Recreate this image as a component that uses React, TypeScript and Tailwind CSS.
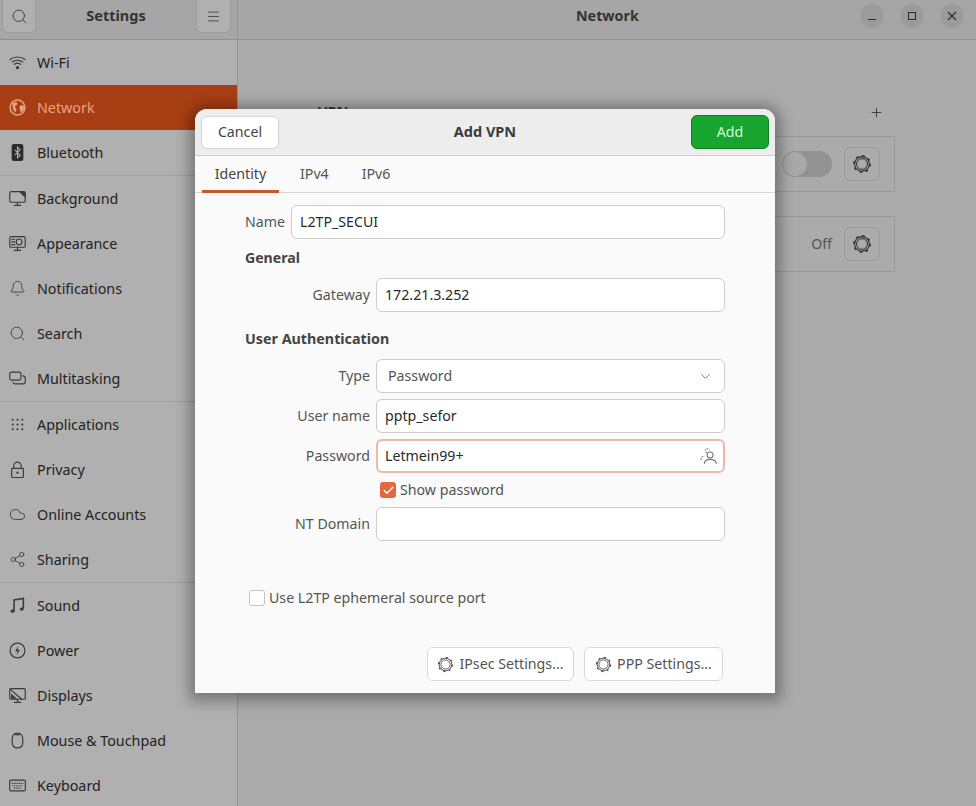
import React from "react";
import { Search, Bell, Cloud, Share2, Menu, Plus, ChevronDown, Check } from "lucide-react";

const s = { size: 17, strokeWidth: 1.2 };
const Svg = ({ children }: { children: React.ReactNode }) => (
  <svg width="17" height="17" viewBox="0 0 16 16" fill="none" stroke="currentColor" strokeWidth="1.1" strokeLinecap="round" strokeLinejoin="round">{children}</svg>
);

const WifiI = () => (
  <svg width="17" height="17" viewBox="0 0 16 16" fill="none" stroke="currentColor" strokeWidth="1.1" strokeLinecap="round">
    <path d="M1 5.2C4.8 2 11.2 2 15 5.2M3 7.5c2.8-2.2 7.2-2.2 10 0M5 9.8c1.7-1.3 4.3-1.3 6 0" />
    <circle cx="8" cy="12.8" r="1.6" fill="currentColor" stroke="none" />
  </svg>
);
const GlobeI = () => (
  <svg width="17" height="17" viewBox="0 0 16 16"><circle cx="8" cy="8" r="7" fill="none" stroke="currentColor" strokeWidth="1.4" /><path d="M3 4 L7 2.5 L8 5 L5.5 7 L7 10 L6 13 L3.5 9 Z M10 6 L14 6 L14 10 L11 13 L10 9 Z" fill="currentColor" /></svg>
);
const BluetoothI = () => (
  <svg width="17" height="17" viewBox="0 0 16 16"><rect x="2.5" y="0" width="11" height="16" rx="2" fill="#2c2c2c" /><path d="M5.5 5.5 L10.5 10.5 L8 13 L8 3 L10.5 5.5 L5.5 10.5" fill="none" stroke="#b0b0b0" strokeWidth="1" /></svg>
);
const MonitorPic = () => (
  <Svg><rect x="0.7" y="1.5" width="14.6" height="10" rx="1.5" /><path d="M5 14.5h6M8 11.5v3" /><path d="M10 1.5 L15 6.5 L15 2 Z" fill="currentColor" /></Svg>
);
const AppearanceI = () => (
  <Svg><rect x="0.7" y="1.5" width="14.6" height="10" rx="1.5" /><path d="M5 14.5h6M8 11.5v3M2.5 4h3M2.5 6.5h3M2.5 9h3" /><circle cx="9.5" cy="6.5" r="2.7" /></Svg>
);
const MultiI = () => (
  <Svg><rect x="0.7" y="2" width="10.5" height="7.5" rx="1.8" /><path d="M13 5.5c1.3 0 2.3.6 2.3 2v3.7c0 1.3-.8 1.8-2 1.8H5.5c-1 0-1.6-.5-1.8-1.3" /></Svg>
);
const GridI = () => (
  <svg width="17" height="17" viewBox="0 0 16 16" fill="currentColor">
    {[3.5, 8, 12.5].flatMap((x) => [3.5, 8, 12.5].map((y) => <circle key={`${x}-${y}`} cx={x} cy={y} r="1" />))}
  </svg>
);
const LockI = () => (
  <svg width="17" height="17" viewBox="0 0 16 16" fill="none" stroke="currentColor" strokeWidth="1.1">
    <rect x="2.5" y="7" width="11" height="8.5" rx="0.8" /><path d="M4.5 7V4.5a3.5 3.5 0 0 1 7 0V7" /><circle cx="8" cy="11" r="1.1" fill="currentColor" stroke="none" />
  </svg>
);
const MusicI = () => (
  <svg width="17" height="17" viewBox="0 0 16 16"><path d="M4.8 13V2.8L13.5 1.4v9.5" fill="none" stroke="currentColor" strokeWidth="1.5" /><ellipse cx="3.4" cy="13.3" rx="1.9" ry="1.6" fill="currentColor" /><ellipse cx="12" cy="11.4" rx="1.9" ry="1.6" fill="currentColor" /></svg>
);
const PowerI = () => (
  <Svg><circle cx="8" cy="8" r="7" /><path d="M8.8 3.5 L5.8 8.6 H8 L7.2 12.5 L10.3 7.2 H8.1 Z" fill="currentColor" stroke="none" /></Svg>
);
const DisplayI = () => (
  <Svg><rect x="0.7" y="1.5" width="14.6" height="10" rx="1" /><path d="M5 14.5h6M8 11.5v3M1 2 L12 11.5" /><path d="M2 6 L7.5 11 H2 Z" fill="currentColor" stroke="none" /></Svg>
);
const MouseI = () => (
  <Svg><path d="M8 1C5 1 3 3 3 6.5v3.5C3 13 5 15 8 15s5-2 5-5V6.5C13 3 11 1 8 1Z" /><path d="M5.5 1.8C6.5 3 9.5 3 10.5 1.8" /></Svg>
);
const KeyboardI = () => (
  <svg width="17" height="17" viewBox="0 0 16 16" fill="none" stroke="currentColor" strokeWidth="1.1">
    <rect x="0.6" y="3" width="14.8" height="10" rx="1.2" />
    <path d="M2.5 6h11M3 8.2h10M4.5 10.5h7" strokeWidth="1.1" strokeDasharray="1 0.7" />
  </svg>
);
const Gear = ({ size = 20 }: { size?: number }) => (
  <svg width={size} height={size} viewBox="0 0 20 20" fill="none" stroke="currentColor">
    <circle cx="10" cy="10" r="5.4" strokeWidth="1" />
    <circle cx="10" cy="10" r="7.4" strokeWidth="1.1" />
    <circle cx="10" cy="10" r="8.4" strokeWidth="1.2" strokeDasharray="2.5 4.1" />
  </svg>
);
const PeopleI = () => (
  <svg width="17" height="17" viewBox="0 0 16 16" fill="none" stroke="#777" strokeWidth="1"><circle cx="9.5" cy="6.5" r="2.8" /><path d="M4 15c.3-3 2.5-4.3 5.5-4.3S15 12 15.5 15" /><path d="M6.5 4.5A2.6 2.6 0 0 1 5 1.5 2.6 2.6 0 0 1 9 2M1 11c0-2 1-3.2 3-3.6" strokeDasharray="1.5 1" /></svg>
);

const groups: [React.ReactNode, string][][] = [
  [
    [<WifiI />, "Wi-Fi"],
    [<GlobeI />, "Network"],
    [<BluetoothI />, "Bluetooth"],
  ],
  [
    [<MonitorPic />, "Background"],
    [<AppearanceI />, "Appearance"],
    [<Bell {...s} />, "Notifications"],
    [<Search {...s} />, "Search"],
    [<MultiI />, "Multitasking"],
  ],
  [
    [<GridI />, "Applications"],
    [<LockI />, "Privacy"],
    [<Cloud {...s} />, "Online Accounts"],
    [<Share2 {...s} />, "Sharing"],
  ],
  [
    [<MusicI />, "Sound"],
    [<PowerI />, "Power"],
    [<DisplayI />, "Displays"],
    [<MouseI />, "Mouse & Touchpad"],
    [<KeyboardI />, "Keyboard"],
  ],
];

const fieldCls = "h-[34px] rounded-[6px] border border-[#cdcdcd] bg-white flex items-center px-2 text-[14.2px] text-[#2a2a2a]";
const Label = ({ children }: { children: React.ReactNode }) => (
  <div className="text-right text-[14.2px] text-[#555] pr-[6px]">{children}</div>
);

export default function App() {
  return (
    <div className="relative w-[976px] h-[806px] overflow-hidden bg-[#ababab] text-[#222] font-['Noto_Sans','Open_Sans',sans-serif]">
      <header className="h-[40px] flex border-b border-[#8f8f8f] bg-[#a6a6a6]">
        <div className="w-[238px] shrink-0 flex items-start justify-between pl-[2px] pr-[6px] border-r border-[#929292]">
          <button className="w-[34px] h-[33px] rounded-b-[6px] bg-[#b0b0b0] border border-t-0 border-[#9c9c9c] flex items-center justify-center text-[#333]"><Search size={17} strokeWidth={1.2} /></button>
          <span className="font-bold text-[14.5px] leading-[31px] text-[#333]">Settings</span>
          <button className="w-[35px] h-[33px] rounded-b-[6px] bg-[#b0b0b0] border border-t-0 border-[#9c9c9c] flex items-center justify-center text-[#333]"><Menu size={15} strokeWidth={1.2} /></button>
        </div>
        <div className="flex-1 flex items-start pl-[338px] pr-[12px]">
          <span className="font-bold text-[14.3px] leading-[31px] text-[#333]">Network</span>
          <div className="ml-auto mt-[4px] flex gap-[16px] text-[#2a2a2a]">
            <span className="w-[24px] h-[24px] rounded-full bg-[#9c9c9c] flex items-center justify-center"><span className="w-[8px] h-[1px] mt-[6px] bg-[#2a2a2a]" /></span>
            <span className="w-[24px] h-[24px] rounded-full bg-[#9c9c9c] flex items-center justify-center"><span className="w-[8px] h-[8px] border border-[#2a2a2a]" /></span>
            <span className="w-[24px] h-[24px] rounded-full bg-[#9c9c9c] flex items-center justify-center">
              <svg width="10" height="10" viewBox="0 0 10 10" stroke="currentColor" strokeWidth="1.1"><path d="M1 1l8 8M9 1l-8 8" /></svg>
            </span>
          </div>
        </div>
      </header>

      <div className="flex h-[766px]">
        <aside className="w-[238px] shrink-0 bg-[#b0b0b0] border-r border-[#929292]">
          {groups.map((g, gi) => (
            <div key={gi} className={gi < groups.length - 1 ? "border-b border-[#a0a0a0]" : ""}>
              {g.map(([icon, label]) => {
                const active = label === "Network";
                return (
                  <div key={label} className={`h-[45px] flex items-center gap-[11px] pl-[8px] text-[14.3px] ${active ? "bg-[#a83e14] text-[#e8a283]" : "text-[#222]"}`}>
                    <span className={`w-[18px] h-[18px] flex items-center justify-center ${active ? "" : "text-[#3a3a3a]"}`}>{icon}</span>
                    <span>{label}</span>
                  </div>
                );
              })}
            </div>
          ))}
        </aside>
        <main className="flex-1 pl-[80px] pr-[81px] pt-[60px]">
          <div className="flex justify-between items-center h-[24px] pr-[11px]">
            <span className="font-bold text-[14.5px] text-[#333]">VPN</span>
            <Plus size={15} strokeWidth={1.2} className="text-[#222]" />
          </div>
          <div className="mt-[12px] h-[56px] border border-[#979797] flex items-center justify-end pr-[14px] gap-[12px]">
            <span className="w-[50px] h-[26px] rounded-full bg-[#929292] flex items-center pl-[1px]">
              <span className="w-[24px] h-[24px] rounded-full bg-[#a8a8a8]" />
            </span>
            <span className="w-[36px] h-[34px] rounded-[6px] border border-[#9b9b9b] bg-[#ababab] flex items-center justify-center text-[#2a2a2a]"><Gear /></span>
          </div>
          <div className="mt-[24px] h-[56px] border border-[#979797] flex items-center justify-end pr-[14px] gap-[12px]">
            <span className="text-[14.2px] text-[#555]">Off</span>
            <span className="w-[36px] h-[34px] rounded-[6px] border border-[#9b9b9b] bg-[#ababab] flex items-center justify-center text-[#2a2a2a]"><Gear /></span>
          </div>
        </main>
      </div>

      <section className="absolute left-[195px] top-[109px] w-[580px] h-[584px] rounded-t-[12px] bg-[#fafafa] shadow-[0_2px_14px_6px_rgba(0,0,0,0.32)]">
        <div className="h-[47px] flex items-center justify-between pl-[6px] pr-[6px] bg-[#ededed] rounded-t-[12px] border-b border-[#cfcfcf]">
          <button className="w-[78px] h-[33px] rounded-[6px] bg-white border border-[#d4d4d4] text-[14.2px] text-[#444]">Cancel</button>
          <span className="font-bold text-[14.5px] text-[#3a3a3a]">Add VPN</span>
          <button className="w-[78px] h-[34px] rounded-[6px] bg-[#17a52f] border border-[#0f7f24] text-[14.2px] text-[#d8f5da]">Add</button>
        </div>
        <div className="h-[37px] flex border-b border-[#d6d6d6] pl-[7px]">
          <div className="w-[77px] h-[37px] flex items-center justify-center text-[14.2px] text-[#444] border-b-[3px] border-[#c9552b] pt-[1px]">Identity</div>
          <div className="ml-[21px] flex items-center text-[14.2px] text-[#555]">IPv4</div>
          <div className="ml-[33px] flex items-center text-[14.2px] text-[#555]">IPv6</div>
        </div>

        <div className="pl-[50px] pr-[50px] pt-[12px]">
          <div className="grid grid-cols-[46px_1fr] items-center">
            <div className="text-[14.2px] text-[#555]">Name</div>
            <div className={fieldCls}>L2TP_SECUI</div>
          </div>
          <div className="mt-[10px] h-[18px] flex items-center font-bold text-[14.1px] text-[#444]">General</div>
          <div className="mt-[11px] grid grid-cols-[131px_1fr] items-center">
            <Label>Gateway</Label>
            <div className={fieldCls}>172.21.3.252</div>
          </div>
          <div className="mt-[18px] h-[18px] flex items-center font-bold text-[14.3px] text-[#444]">User Authentication</div>
          <div className="mt-[11px] grid grid-cols-[131px_1fr] gap-y-[6px] items-center">
            <Label>Type</Label>
            <div className={`${fieldCls} justify-between pl-[11px] pr-[11px] text-[#555]`}>Password<ChevronDown size={15} strokeWidth={1.2} className="text-[#444]" /></div>
            <Label>User name</Label>
            <div className={fieldCls}>pptp_sefor</div>
            <Label>Password</Label>
            <div className="h-[34px] rounded-[6px] border-2 border-[#ecb9a4] bg-white flex items-center justify-between pl-[7px] pr-[6px] text-[14.2px] text-[#2a2a2a]">Letmein99+<PeopleI /></div>
          </div>
          <div className="ml-[135px] mt-[8px] h-[18px] flex items-center gap-[4px] text-[14.2px] text-[#555]">
            <span className="w-[16px] h-[16px] rounded-[3px] bg-[#e2693f] flex items-center justify-center text-white"><Check size={13} strokeWidth={2.4} /></span>
            Show password
          </div>
          <div className="mt-[8px] grid grid-cols-[131px_1fr] items-center">
            <Label>NT Domain</Label>
            <div className={fieldCls} />
          </div>
          <div className="mt-[48px] ml-[4px] h-[18px] flex items-center gap-[4px] text-[14.2px] text-[#555]">
            <span className="w-[16px] h-[16px] rounded-[3px] bg-white border border-[#c4c4c4]" />
            Use L2TP ephemeral source port
          </div>
          <div className="mt-[40px] flex justify-end gap-[10px] pr-[2px]">
            <button className="w-[147px] h-[34px] rounded-[6px] bg-white border border-[#d8d8d8] flex items-center justify-center gap-[5px] text-[14.2px] text-[#555]"><span className="text-[#444]"><Gear size={17} /></span>IPsec Settings...</button>
            <button className="w-[139px] h-[34px] rounded-[6px] bg-white border border-[#d8d8d8] flex items-center justify-center gap-[5px] text-[14.2px] text-[#555]"><span className="text-[#444]"><Gear size={17} /></span>PPP Settings...</button>
          </div>
        </div>
      </section>
    </div>
  );
}
